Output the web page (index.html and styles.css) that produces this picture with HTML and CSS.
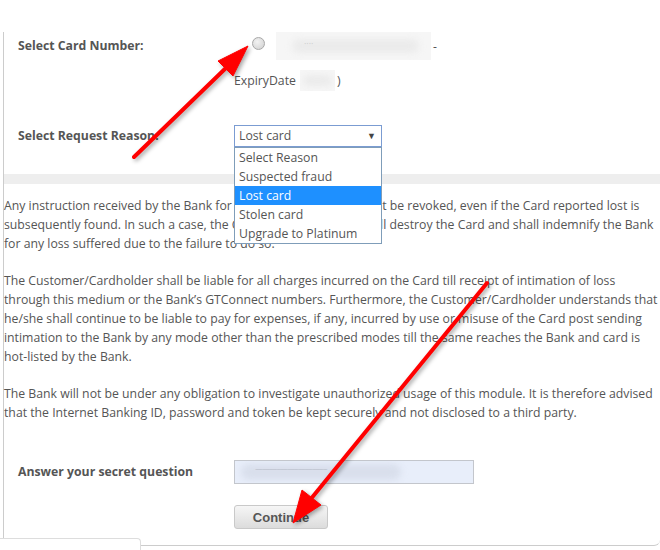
FILE: index.html
```html
<!DOCTYPE html>
<html lang="en">
<head>
    <meta charset="UTF-8">
    <meta name="viewport" content="width=device-width, initial-scale=1.0">
    <title>Hotlist Card</title>
    <link rel="stylesheet" href="styles.css">
</head>
<body>
    <div class="panel">
        <div class="form-row card-row">
            <div class="label">Select Card Number:</div>
            <div class="value">
                <div class="card-line">
                    <span class="radio"></span>
                    <span class="masked card-mask"><span class="blur-fill"></span><span class="blur-dots">····</span></span>
                    <span class="dash">-</span>
                </div>
                <div class="expiry-line">ExpiryDate <span class="masked expiry-mask"><span class="blur-fill"></span></span>)</div>
            </div>
        </div>

        <div class="form-row reason-row">
            <div class="label">Select Request Reason:</div>
            <div class="value">
                <div class="select-wrap">
                    <div class="select">Lost card <span class="caret">&#9660;</span></div>
                    <ul class="options">
                        <li>Select Reason</li>
                        <li>Suspected fraud</li>
                        <li class="selected">Lost card</li>
                        <li>Stolen card</li>
                        <li>Upgrade to Platinum</li>
                    </ul>
                </div>
            </div>
        </div>

        <div class="band"></div>

        <div class="terms">
            <p>Any instruction received by the Bank for hot-listing the Card cannot be revoked, even if the Card reported lost is subsequently found. In such a case, the Customer/Cardholder shall destroy the Card and shall indemnify the Bank for any loss suffered due to the failure to do so.</p>
            <p>The Customer/Cardholder shall be liable for all charges incurred on the Card till receipt of intimation of loss through this medium or the Bank&rsquo;s GTConnect numbers. Furthermore, the Customer/Cardholder understands that he/she shall continue to be liable to pay for expenses, if any, incurred by use or misuse of the Card post sending intimation to the Bank by any mode other than the prescribed modes till the same reaches the Bank and card is hot-listed by the Bank.</p>
            <p>The Bank will not be under any obligation to investigate unauthorized usage of this module. It is therefore advised that the Internet Banking ID, password and token be kept securely and not disclosed to a third party.</p>
        </div>

        <div class="form-row answer-row">
            <div class="label">Answer your secret question</div>
            <div class="value">
                <div class="answer-input"><span class="answer-blur"></span><span class="answer-dots">~~~~~~~~~~~~~~~~~~~~</span></div>
            </div>
        </div>

        <div class="form-row button-row">
            <div></div>
            <div class="value">
                <button class="continue-button">Continue</button>
            </div>
        </div>
    </div>
    <div class="tab"></div>

    <!-- annotation arrows drawn over the page -->
    <svg class="arrows" width="660" height="550" viewBox="0 0 660 550">
        <g fill="#f00" stroke="#f00">
            <line x1="134" y1="157" x2="228" y2="66" stroke-width="4" stroke-linecap="round"/>
            <polygon points="248,46 233,76 218,61" stroke-width="1" stroke-linejoin="round"/>
            <line x1="487" y1="283" x2="310" y2="500" stroke-width="4" stroke-linecap="round"/>
            <polygon points="293,523 302,490 321,505" stroke-width="1" stroke-linejoin="round"/>
        </g>
    </svg>
</body>
</html>
```

FILE: styles.css
```css
body {
    margin: 0;
    font-family: "Open Sans", "Noto Sans", sans-serif;
    font-size: 12.25px;
    color: #555;
    background: #fff;
    position: relative;
    width: 660px;
    height: 550px;
    overflow: hidden;
}
.panel {
    margin-left: 3px;
    border-left: 1px solid #ccc;
    border-bottom: 1px solid #ccc;
    border-bottom-right-radius: 6px;
    padding-bottom: 16px;
}
.form-row {
    display: grid;
    grid-template-columns: 216px 1fr;
    padding-left: 14px;
}
.label {
    font-weight: bold;
    color: #555;
}
.card-row {
    margin-top: 32px;
}
.card-row .label {
    line-height: 28px;
}
.card-line {
    display: flex;
    align-items: center;
    height: 28px;
}
.radio {
    width: 11px;
    height: 11px;
    border-radius: 50%;
    border: 1px solid #a8a8a8;
    background: radial-gradient(circle at 40% 35%, #f2f2f2, #cfcfcf);
    margin-left: 18px;
    margin-top: -6px;
}
.masked {
    display: inline-block;
    position: relative;
    background: #f6f6f6;
    overflow: hidden;
    vertical-align: middle;
}
.blur-fill {
    position: absolute;
    left: 10%;
    right: 8%;
    top: 25%;
    bottom: 25%;
    background: #ebebeb;
    border-radius: 12px;
    filter: blur(3px);
}
.blur-dots {
    position: absolute;
    left: 28px;
    top: 5px;
    font-size: 9px;
    color: #ccc;
}
.card-mask {
    width: 155px;
    height: 28px;
    margin-left: 11px;
}
.dash {
    margin-left: 2px;
}
.expiry-line {
    margin-top: 10px;
    height: 21px;
    line-height: 21px;
    display: flex;
    align-items: center;
}
.expiry-mask {
    width: 35px;
    height: 21px;
    margin: 0 2px 0 4px;
}
.reason-row {
    margin-top: 34px;
}
.reason-row .label {
    line-height: 22px;
}
.select-wrap {
    position: relative;
    width: 148px;
}
.select {
    box-sizing: border-box;
    height: 22px;
    line-height: 20px;
    border: 1px solid #7b9cd2;
    padding-left: 4px;
    color: #555;
    position: relative;
}
.caret {
    position: absolute;
    right: 5px;
    top: 0;
    font-size: 9px;
    color: #444;
}
.options {
    position: absolute;
    top: 100%;
    left: 0;
    width: 148px;
    box-sizing: border-box;
    margin: 0;
    padding: 0;
    list-style: none;
    background: #fff;
    border: 1px solid #7f9db9;
    z-index: 2;
}
.options li {
    line-height: 19px;
    padding-left: 4px;
    color: #555;
}
.options li.selected {
    background: #1e90ff;
    color: #fff;
}
.band {
    margin-top: 27px;
    height: 10px;
    background: #eee;
}
.terms {
    margin-top: 12px;
}
.terms p {
    margin: 0 0 18px;
    line-height: 19px;
}
.terms p:last-child {
    margin-bottom: 0;
}
.answer-row {
    margin-top: 38px;
}
.answer-row .label {
    line-height: 24px;
}
.answer-input {
    position: relative;
    box-sizing: border-box;
    width: 240px;
    height: 24px;
    background: #e8eefa;
    border: 1px solid #c3c6cc;
    overflow: hidden;
}
.answer-blur {
    position: absolute;
    left: 6px;
    top: 3px;
    width: 160px;
    height: 16px;
    border-radius: 8px;
    background: #d9dfec;
    filter: blur(3px);
}
.answer-dots {
    position: absolute;
    left: 20px;
    top: 2px;
    font-size: 8px;
    color: #b4b9c6;
    letter-spacing: -1px;
}
.button-row {
    margin-top: 21px;
}
.continue-button {
    width: 94px;
    height: 24px;
    border: 1px solid #c9c9c9;
    border-radius: 3px;
    background: linear-gradient(#f6f6f6, #dcdcdc);
    font-family: "Liberation Sans", Arial, sans-serif;
    font-weight: bold;
    font-size: 13px;
    color: #555;
    padding: 0;
}
.tab {
    position: relative;
    margin-top: -8px;
    width: 140px;
    height: 14px;
    background: #fff;
    border-top: 1px solid #ddd;
    border-right: 1px solid #ddd;
    border-top-right-radius: 4px;
}
.arrows {
    position: absolute;
    top: 0;
    left: 0;
    pointer-events: none;
    filter: drop-shadow(2px 2px 2px rgba(0, 0, 0, 0.35));
}
```
